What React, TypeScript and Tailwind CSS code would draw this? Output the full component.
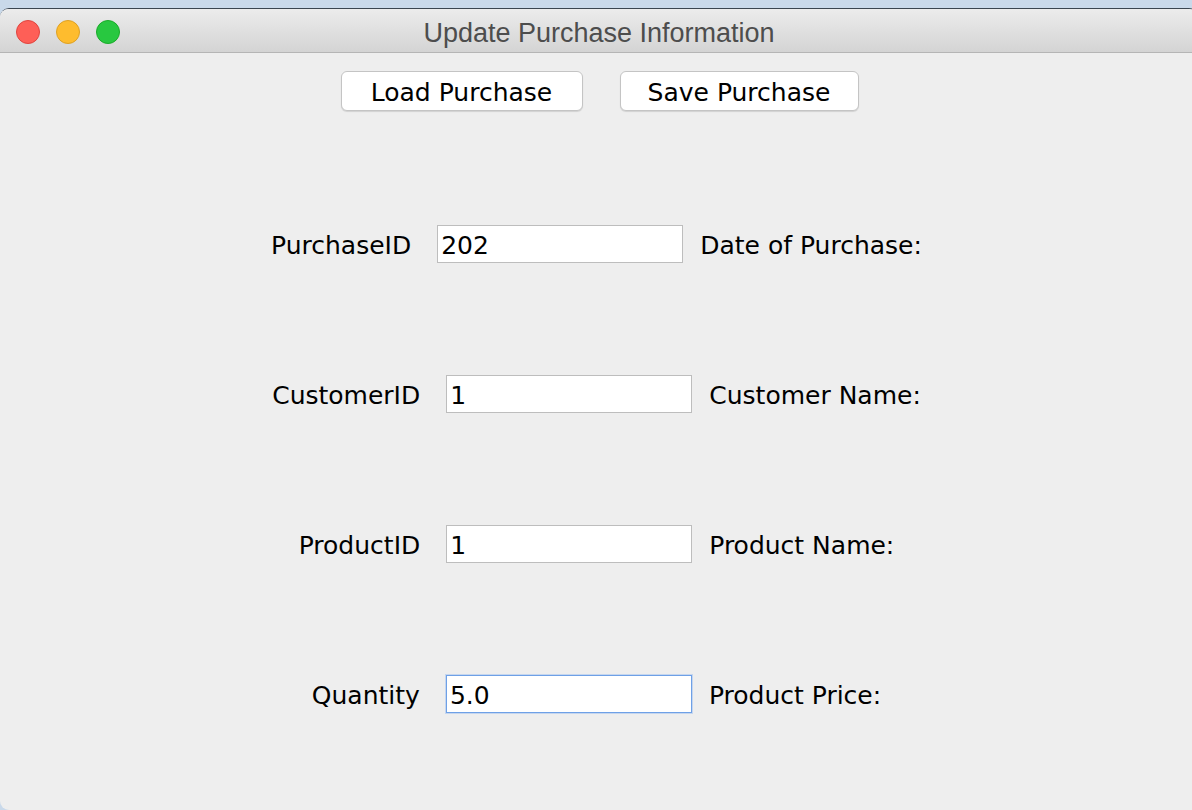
import React from "react";

const font = { fontFamily: '"DejaVu Sans", "Liberation Sans", sans-serif' };

function Row({
  label,
  value,
  right,
  focused,
}: {
  label: string;
  value: string;
  right: string;
  focused?: boolean;
}) {
  return (
    <div className="flex items-center justify-center h-[38px]">
      <span className="text-[25px] text-black leading-none mt-[3px]">{label}</span>
      <div
        className={`ml-[26px] w-[246px] h-[38px] bg-white flex items-center pl-[3px] pt-[3px] text-[25px] text-black leading-none ${
          focused
            ? "border border-[#6ea0e6] shadow-[0_0_0_1px_rgba(120,170,240,0.35)]"
            : "border border-[#bdbdbd]"
        }`}
      >
        {value}
      </div>
      <span className="ml-[17px] text-[25px] text-black leading-none mt-[3px]">{right}</span>
    </div>
  );
}

export default function App() {
  return (
    <div className="w-[1192px] h-[810px] overflow-hidden bg-[#c9d9ea] relative" style={font}>
      <div className="mt-[8px] w-[1198px] h-[802px] border-t border-[#3a4550] rounded-t-[9px] rounded-bl-[9px] overflow-hidden bg-[#eeeeee] flex flex-col">
        {/* title bar */}
        <div className="h-[44px] shrink-0 bg-gradient-to-b from-[#ececec] to-[#d4d4d4] border-b border-[#b5b5b5] relative flex items-center justify-center">
          <div className="absolute left-[16px] top-[11px] flex gap-[16px]">
            <div className="w-[24px] h-[24px] rounded-full bg-[#fe5f57] border border-[#e0443e]" />
            <div className="w-[24px] h-[24px] rounded-full bg-[#febc2e] border border-[#dea123]" />
            <div className="w-[24px] h-[24px] rounded-full bg-[#28c840] border border-[#1aab29]" />
          </div>
          <span
            className="text-[27px] text-[#4d4d4d] leading-none mt-[6px]"
            style={{ fontFamily: '"Liberation Sans", Arial, sans-serif' }}
          >
            Update Purchase Information
          </span>
        </div>

        {/* buttons */}
        <div className="mt-[18px] flex justify-center gap-[37px] pl-[1px]">
          <button className="w-[242px] h-[40px] bg-white rounded-[6px] border border-[#c4c4c4] shadow-[0_1px_1px_rgba(0,0,0,0.12)] text-[25px] text-black leading-none pt-[2px]">
            Load Purchase
          </button>
          <button className="w-[239px] h-[40px] bg-white rounded-[6px] border border-[#c4c4c4] shadow-[0_1px_1px_rgba(0,0,0,0.12)] text-[25px] text-black leading-none pt-[2px]">
            Save Purchase
          </button>
        </div>

        {/* form rows */}
        <div className="mt-[114px] flex flex-col gap-[112px] pr-[5px]">
          <Row label="PurchaseID" value="202" right="Date of Purchase:" />
          <Row label="CustomerID" value="1" right="Customer Name:" />
          <Row label="ProductID" value="1" right="Product Name:" />
          <Row label="Quantity" value="5.0" right="Product Price:" focused />
        </div>
      </div>
    </div>
  );
}
